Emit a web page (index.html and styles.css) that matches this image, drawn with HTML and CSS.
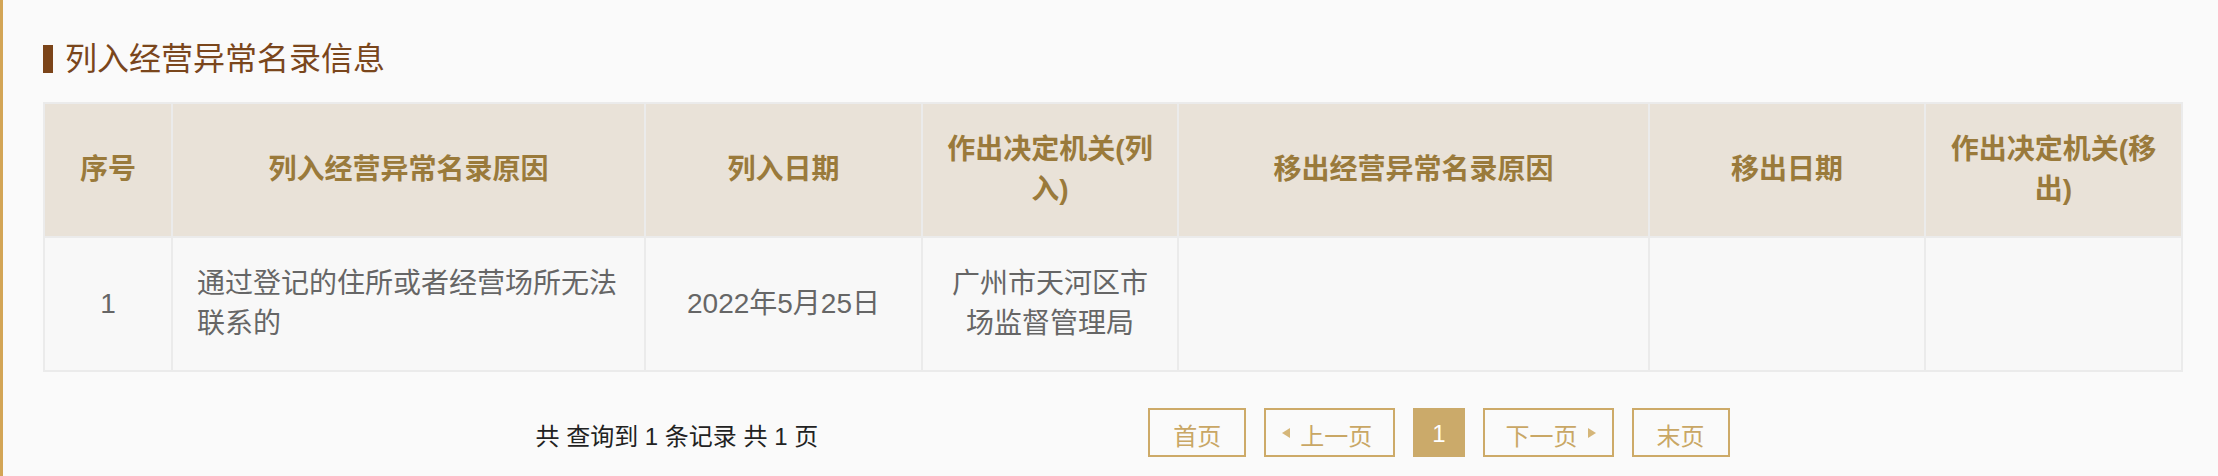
FILE: index.html
```html
<!DOCTYPE html>
<html lang="zh-CN">
<head>
<meta charset="utf-8">
<title>列入经营异常名录信息</title>
<link rel="stylesheet" href="styles.css">
</head>
<body>
<div class="page">
  <h2 class="section-title"><span class="marker"></span>列入经营异常名录信息</h2>
  <table class="data-table">
    <thead>
      <tr>
        <th class="c1">序号</th>
        <th class="c2">列入经营异常名录原因</th>
        <th class="c3">列入日期</th>
        <th class="c4">作出决定机关(列入)</th>
        <th class="c5">移出经营异常名录原因</th>
        <th class="c6">移出日期</th>
        <th class="c7">作出决定机关(移出)</th>
      </tr>
    </thead>
    <tbody>
      <tr>
        <td>1</td>
        <td class="left">通过登记的住所或者经营场所无法联系的</td>
        <td>2022年5月25日</td>
        <td>广州市天河区市场监督管理局</td>
        <td></td>
        <td></td>
        <td></td>
      </tr>
    </tbody>
  </table>
  <div class="pager">
    <span class="summary">共 查询到 1 条记录 共 1 页</span>
    <div class="pages">
      <a class="pbtn">首页</a>
      <a class="pbtn prev"><span class="tri tri-left"></span>上一页</a>
      <a class="pbtn current">1</a>
      <a class="pbtn next">下一页<span class="tri tri-right"></span></a>
      <a class="pbtn">末页</a>
    </div>
  </div>
</div>
</body>
</html>
```

FILE: styles.css
```css
* { box-sizing: border-box; }
html, body {
  margin: 0;
  padding: 0;
  background: #fafafa;
}
body {
  font-family: "Liberation Sans", "Noto Sans CJK SC", sans-serif;
  color: #666;
}
.page {
  border-left: 3px solid #d3a556;
  min-height: 476px;
  padding: 43px 35px 0 40px;
}
.section-title {
  margin: 0 0 27px 0;
  font-size: 32px;
  line-height: 32px;
  font-weight: normal;
  color: #7a461c;
  display: flex;
  align-items: center;
}
.marker {
  display: inline-block;
  width: 10px;
  height: 28px;
  background: #7b4419;
  margin-right: 12px;
}
.data-table {
  width: 2140px;
  table-layout: fixed;
  border-collapse: separate;
  border-spacing: 0;
  border-left: 2px solid #ebebeb;
  border-top: 2px solid #ebebeb;
}
.data-table th,
.data-table td {
  border-right: 2px solid #ebebeb;
  border-bottom: 2px solid #ebebeb;
  padding: 26px 22px;
  font-size: 28px;
  line-height: 40px;
  text-align: center;
  vertical-align: middle;
  height: 134px;
}
.data-table th {
  background: #e9e2d8;
  color: #9a7a3b;
  font-weight: bold;
}
.data-table td {
  background: #f8f8f8;
  color: #666;
}
.data-table td.left { text-align: left; padding-left: 24px; }
.c1 { width: 128px; }
.c2 { width: 473px; }
.c3 { width: 277px; }
.c4 { width: 256px; }
.c5 { width: 471px; }
.c6 { width: 276px; }
.c7 { width: 257px; }
.pager {
  display: flex;
  align-items: center;
  justify-content: center;
  width: 2140px;
  padding-left: 39px;
  margin-top: 36px;
}
.summary {
  font-size: 24px;
  color: #222;
  margin-right: 330px;
  padding-top: 3px;
}
.pages {
  display: flex;
  gap: 18px;
}
.pbtn {
  display: flex;
  align-items: center;
  height: 49px;
  padding: 3px 23px 0;
  border: 2px solid #cdaa68;
  color: #c9a765;
  font-size: 24px;
  text-decoration: none;
}
.pbtn.prev { padding-left: 16px; padding-right: 21px; }
.pbtn.next { padding-left: 21px; padding-right: 16px; }
.pbtn.current {
  background: #cbaa6a;
  border-color: #cbaa6a;
  color: #fff;
  padding-left: 17px;
  padding-right: 17px;
}
.tri {
  display: inline-block;
  width: 0;
  height: 0;
  border-top: 5px solid transparent;
  border-bottom: 5px solid transparent;
}
.tri-left { border-right: 8px solid #d5b679; margin-right: 10px; margin-top: -3px; }
.tri-right { border-left: 8px solid #d5b679; margin-left: 10px; margin-top: -3px; }
```
